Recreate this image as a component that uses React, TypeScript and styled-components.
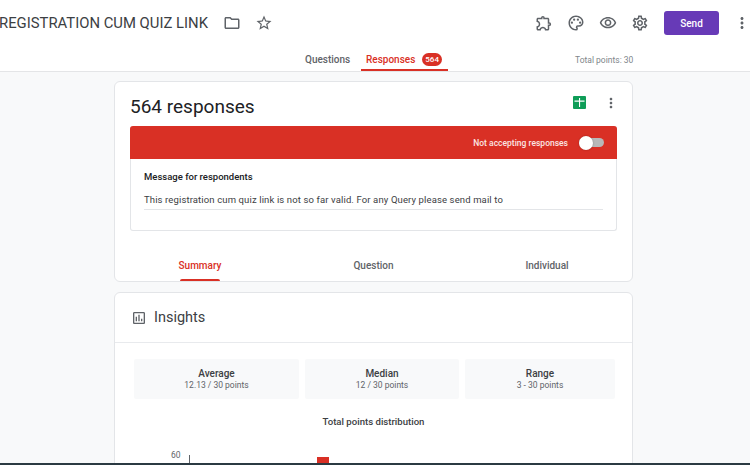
import styled, { createGlobalStyle } from "styled-components"
import {
  MdMoreVert,
  MdOutlineExtension,
  MdOutlineFolder,
  MdOutlineInsertChart,
  MdOutlinePalette,
  MdOutlineSettings,
  MdOutlineVisibility,
  MdStarBorder,
} from "react-icons/md"

const Global = createGlobalStyle`
  html, body {
    margin: 0;
    padding: 0;
    background: #f8f9fa;
    font-family: Roboto, "Liberation Sans", sans-serif;
  }
  * { box-sizing: border-box; }
`

const Screen = styled.div`
  width: 750px;
  height: 465px;
  display: flex;
  flex-direction: column;
  overflow: hidden;
  background: #f8f9fa;
`

const Header = styled.header`
  flex: none;
  height: 72px;
  background: #fff;
  border-bottom: 1px solid #e4e5e7;
`

const TopRow = styled.div`
  height: 46px;
  display: flex;
  align-items: center;
  color: #5f6368;
`

const Title = styled.h1`
  margin: 0 0 0 -1px;
  font-size: 14.85px;
  font-weight: 400;
  color: #3c4043;
  white-space: nowrap;
`

const TitleIcons = styled.div`
  display: flex;
  align-items: center;
  gap: 14px;
  margin-left: 15px;
`

const Spacer = styled.div`
  flex: 1;
`

const Tools = styled.div`
  display: flex;
  align-items: center;
  gap: 14px;
`

const SendButton = styled.button`
  width: 55px;
  height: 24px;
  margin-left: 15px;
  margin-right: 14px;
  border: 0;
  border-radius: 3px;
  background: #673ab7;
  color: #fff;
  font-family: inherit;
  font-size: 10px;
  font-weight: 500;
`

const MoreButton = styled.div`
  display: flex;
  margin-right: -1px;
`

const TabRow = styled.div`
  height: 25px;
  display: flex;
  align-items: stretch;
  padding-left: 305px;
`

const TopTab = styled.div<{ $active?: boolean; $width: number }>`
  width: ${p => p.$width}px;
  display: flex;
  align-items: center;
  gap: 7px;
  padding-left: ${p => (p.$active ? 5 : 0)}px;
  padding-top: 3px;
  font-size: 10px;
  font-weight: 500;
  color: ${p => (p.$active ? "#d93025" : "#5f6368")};
  border-bottom: 2px solid ${p => (p.$active ? "#d93025" : "transparent")};
`

const CountBadge = styled.span`
  padding: 1px 3px;
  border-radius: 7px;
  background: #d93025;
  color: #fff;
  font-size: 8px;
  line-height: 11px;
`

const TotalPoints = styled.div`
  margin-left: 127px;
  align-self: center;
  padding-top: 3px;
  font-size: 8.5px;
  color: #80868b;
`

const Main = styled.main`
  flex: 1;
  min-height: 0;
  overflow: hidden;
  padding: 9px 117px 0 114px;
  display: flex;
  flex-direction: column;
  gap: 10px;
`

const Card = styled.section`
  flex: none;
  background: #fff;
  border: 1px solid #e3e5e8;
  border-radius: 6px;
`

const SummaryHead = styled.div`
  height: 44px;
  padding: 0 13px 0 15px;
  display: flex;
  align-items: center;
  justify-content: space-between;
`

const ResponseCount = styled.h2`
  margin: 4px 0 0;
  font-size: 19px;
  font-weight: 400;
  color: #202124;
`

const HeadIcons = styled.div`
  display: flex;
  align-items: center;
  gap: 17px;
  color: #5f6368;
  margin-top: -3px;
`

const Notice = styled.div`
  margin: 0 15px;
  height: 105px;
  border: 1px solid #e3e5e8;
  border-top: 0;
  border-radius: 3px;
`

const NoticeBar = styled.div`
  height: 33px;
  margin: 0 -1px;
  padding-right: 13px;
  display: flex;
  align-items: center;
  justify-content: flex-end;
  gap: 11px;
  background: #d93025;
  border-radius: 3px 3px 0 0;
  color: #fbe6e4;
  font-size: 8.5px;
  font-weight: 500;
`

const ToggleTrack = styled.div`
  position: relative;
  width: 25px;
  height: 9px;
  border-radius: 5px;
  background: #b8b8b8;
`

const ToggleKnob = styled.div`
  position: absolute;
  left: 0;
  top: -2px;
  width: 14px;
  height: 14px;
  border-radius: 50%;
  background: #fff;
  box-shadow: 0 0 2px rgba(0, 0, 0, 0.3);
`

const NoticeBody = styled.div`
  padding: 12px 13px 0;
`

const NoticeTitle = styled.div`
  font-size: 9.5px;
  font-weight: 500;
  color: #202124;
`

const NoticeText = styled.div`
  margin-top: 12px;
  padding-bottom: 4px;
  border-bottom: 1px solid #e3e5e8;
  font-size: 9.5px;
  letter-spacing: 0.125px;
  color: #3c4043;
`

const SummaryTabs = styled.div`
  height: 50px;
  display: grid;
  grid-template-columns: 170px 177px 170px;
`

const SummaryTab = styled.div<{ $active?: boolean }>`
  position: relative;
  display: flex;
  justify-content: center;
  padding-top: 29px;
  font-size: 10px;
  font-weight: 500;
  color: ${p => (p.$active ? "#d93025" : "#5f6368")};
`

const TabMark = styled.div`
  position: absolute;
  bottom: 0;
  left: 65px;
  width: 40px;
  height: 2px;
  border-radius: 2px 2px 0 0;
  background: #d93025;
`

const InsightsHead = styled.div`
  height: 50px;
  padding-left: 16px;
  display: flex;
  align-items: center;
  gap: 7px;
  border-bottom: 1px solid #e8eaed;
  color: #5f6368;
`

const InsightsTitle = styled.h3`
  margin: 0;
  font-size: 14.5px;
  font-weight: 400;
  color: #3c4043;
`

const Stats = styled.div`
  margin: 16px 18px 0 19px;
  display: grid;
  grid-template-columns: 165px 154px 150px;
  gap: 6px;
`

const StatBox = styled.div`
  height: 40px;
  background: #f8f9fa;
  border-radius: 2px;
  display: flex;
  flex-direction: column;
  align-items: center;
  justify-content: center;
`

const StatName = styled.div`
  font-size: 10px;
  font-weight: 500;
  line-height: 12px;
  color: #3c4043;
`

const StatValue = styled.div`
  font-size: 8.5px;
  line-height: 11px;
  color: #5f6368;
`

const ChartTitle = styled.div`
  margin-top: 17px;
  text-align: center;
  font-size: 9.6px;
  font-weight: 500;
  color: #3c4043;
`

const Chart = styled.div`
  margin-top: 28px;
  height: 20px;
  display: flex;
  align-items: flex-start;
  padding-left: 56px;
`

const AxisLabel = styled.div`
  width: 18px;
  margin-top: -5px;
  font-size: 8.5px;
  line-height: 11px;
  color: #5f6368;
`

const Axis = styled.div`
  width: 1px;
  height: 20px;
  background: #5f6368;
`

const Bar = styled.div<{ $offset: number; $top: number }>`
  width: 12px;
  height: 20px;
  margin-left: ${p => p.$offset}px;
  margin-top: ${p => p.$top}px;
  background: #d93025;
`

const BottomEdge = styled.div`
  flex: none;
  height: 2px;
  background: #2b3a42;
`

function SheetsIcon() {
  return (
    <svg width="13" height="13" viewBox="0 0 13 13">
      <rect width="13" height="13" rx="1" fill="#0f9d58" />
      <path d="M1.5 4.6h10v1.1h-10zM6 2h1.1v9H6z" fill="#fff" />
    </svg>
  )
}

const stats = [
  { name: "Average", value: "12.13 / 30 points" },
  { name: "Median", value: "12 / 30 points" },
  { name: "Range", value: "3 - 30 points" },
]

export default function App() {
  return (
    <Screen>
      <Global />
      <Header>
        <TopRow>
          <Title>REGISTRATION CUM QUIZ LINK</Title>
          <TitleIcons>
            <MdOutlineFolder size={18} />
            <MdStarBorder size={18} />
          </TitleIcons>
          <Spacer />
          <Tools>
            <MdOutlineExtension size={18} />
            <MdOutlinePalette size={18} />
            <MdOutlineVisibility size={18} />
            <MdOutlineSettings size={18} />
          </Tools>
          <SendButton>Send</SendButton>
          <MoreButton>
            <MdMoreVert size={18} />
          </MoreButton>
        </TopRow>
        <TabRow>
          <TopTab $width={56}>Questions</TopTab>
          <TopTab $active $width={87}>
            Responses <CountBadge>564</CountBadge>
          </TopTab>
          <TotalPoints>Total points: 30</TotalPoints>
        </TabRow>
      </Header>
      <Main>
        <Card>
          <SummaryHead>
            <ResponseCount>564 responses</ResponseCount>
            <HeadIcons>
              <SheetsIcon />
              <MdMoreVert size={16} />
            </HeadIcons>
          </SummaryHead>
          <Notice>
            <NoticeBar>
              Not accepting responses
              <ToggleTrack>
                <ToggleKnob />
              </ToggleTrack>
            </NoticeBar>
            <NoticeBody>
              <NoticeTitle>Message for respondents</NoticeTitle>
              <NoticeText>
                This registration cum quiz link is not so far valid. For any Query please send mail to
              </NoticeText>
            </NoticeBody>
          </Notice>
          <SummaryTabs>
            <SummaryTab $active>
              Summary
              <TabMark />
            </SummaryTab>
            <SummaryTab>Question</SummaryTab>
            <SummaryTab>Individual</SummaryTab>
          </SummaryTabs>
        </Card>
        <Card>
          <InsightsHead>
            <MdOutlineInsertChart size={16} />
            <InsightsTitle>Insights</InsightsTitle>
          </InsightsHead>
          <Stats>
            {stats.map(s => (
              <StatBox key={s.name}>
                <StatName>{s.name}</StatName>
                <StatValue>{s.value}</StatValue>
              </StatBox>
            ))}
          </Stats>
          <ChartTitle>Total points distribution</ChartTitle>
          <Chart>
            <AxisLabel>60</AxisLabel>
            <Axis />
            <Bar $offset={127} $top={2} />
          </Chart>
        </Card>
      </Main>
      <BottomEdge />
    </Screen>
  )
}
